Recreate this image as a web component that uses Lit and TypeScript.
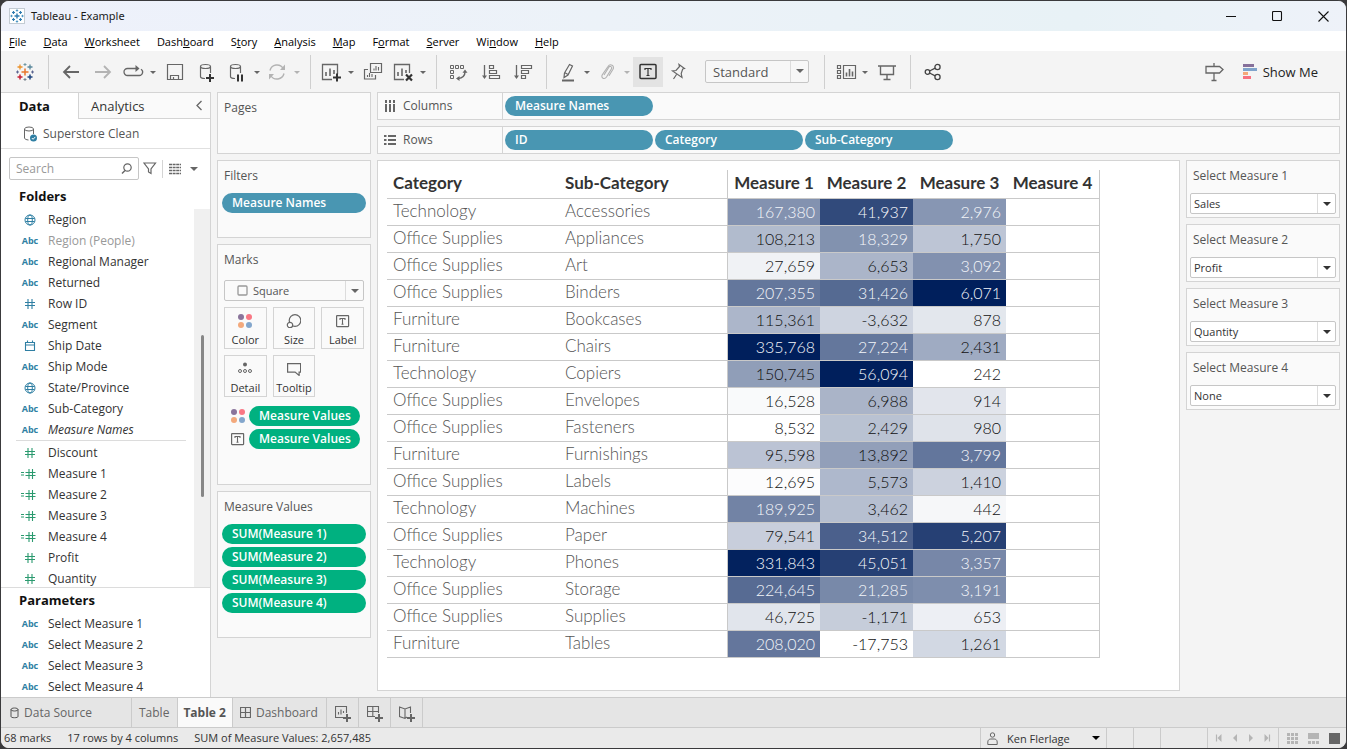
import { LitElement, html, svg, css, nothing, TemplateResult } from "lit";
import { customElement, state } from "lit/decorators.js";
import { classMap } from "lit/directives/class-map.js";

type Kind = "geo" | "abc" | "num" | "date" | "calc";
interface Field { name: string; kind: Kind; muted?: boolean; italic?: boolean; }
interface Row { category: string; sub: string; values: [number, number, number]; }

const DIMENSIONS: Field[] = [
  { name: "Region", kind: "geo" },
  { name: "Region (People)", kind: "abc", muted: true },
  { name: "Regional Manager", kind: "abc" },
  { name: "Returned", kind: "abc" },
  { name: "Row ID", kind: "num" },
  { name: "Segment", kind: "abc" },
  { name: "Ship Date", kind: "date" },
  { name: "Ship Mode", kind: "abc" },
  { name: "State/Province", kind: "geo" },
  { name: "Sub-Category", kind: "abc" },
  { name: "Measure Names", kind: "abc", italic: true },
];

const MEASURES: Field[] = [
  { name: "Discount", kind: "num" },
  { name: "Measure 1", kind: "calc" },
  { name: "Measure 2", kind: "calc" },
  { name: "Measure 3", kind: "calc" },
  { name: "Measure 4", kind: "calc" },
  { name: "Profit", kind: "num" },
  { name: "Quantity", kind: "num" },
];

const PARAMETERS = [
  { name: "Select Measure 1", value: "Sales" },
  { name: "Select Measure 2", value: "Profit" },
  { name: "Select Measure 3", value: "Quantity" },
  { name: "Select Measure 4", value: "None" },
];

const ROWS: Row[] = [
  { category: "Technology", sub: "Accessories", values: [167380, 41937, 2976] },
  { category: "Office Supplies", sub: "Appliances", values: [108213, 18329, 1750] },
  { category: "Office Supplies", sub: "Art", values: [27659, 6653, 3092] },
  { category: "Office Supplies", sub: "Binders", values: [207355, 31426, 6071] },
  { category: "Furniture", sub: "Bookcases", values: [115361, -3632, 878] },
  { category: "Furniture", sub: "Chairs", values: [335768, 27224, 2431] },
  { category: "Technology", sub: "Copiers", values: [150745, 56094, 242] },
  { category: "Office Supplies", sub: "Envelopes", values: [16528, 6988, 914] },
  { category: "Office Supplies", sub: "Fasteners", values: [8532, 2429, 980] },
  { category: "Furniture", sub: "Furnishings", values: [95598, 13892, 3799] },
  { category: "Office Supplies", sub: "Labels", values: [12695, 5573, 1410] },
  { category: "Technology", sub: "Machines", values: [189925, 3462, 442] },
  { category: "Office Supplies", sub: "Paper", values: [79541, 34512, 5207] },
  { category: "Technology", sub: "Phones", values: [331843, 45051, 3357] },
  { category: "Office Supplies", sub: "Storage", values: [224645, 21285, 3191] },
  { category: "Office Supplies", sub: "Supplies", values: [46725, -1171, 653] },
  { category: "Furniture", sub: "Tables", values: [208020, -17753, 1261] },
];

// Each measure has its own white-to-navy scale, from its lowest to its highest value.
const NAVY = [0, 31, 92];
const RANGES = [0, 1, 2].map((i) => {
  const all = ROWS.map((r) => r.values[i]);
  return { min: Math.min(...all), max: Math.max(...all) };
});
const share = (value: number, i: number) =>
  (value - RANGES[i].min) / (RANGES[i].max - RANGES[i].min);
const shade = (t: number) =>
  `rgb(${NAVY.map((c) => Math.round(255 + (c - 255) * t)).join(",")})`;

const icon = (body: unknown, w = 24, h = 24) => html`<svg
  class="icon" width=${w} height=${h} viewBox="0 0 ${w} ${h}" aria-hidden="true">${body}</svg>`;

const plus = (x: number, y: number, r: number, color: string, w = 1) =>
  svg`<path d="M${x - r} ${y}H${x + r}M${x} ${y - r}V${y + r}" stroke=${color} stroke-width=${w} fill="none"/>`;

const G = "#666";
const I = {
  logo: svg`${plus(12, 12, 3.5, "#e8762c", 1.5)}${plus(7, 7, 2.5, "#eb9129", 1.3)}${plus(17, 7, 2.5, "#59879b", 1.3)}
    ${plus(7, 17, 2.5, "#c72035", 1.5)}${plus(17, 17, 2.5, "#1f447e", 1.5)}${plus(12, 4.5, 1.5, "#7099a5")}
    ${plus(12, 19.5, 1.5, "#7b848f")}${plus(4.5, 12, 1.5, "#5b6591")}${plus(19.5, 12, 1.5, "#5b6591")}`,
  appLogo: svg`<rect x=".5" y=".5" width="15" height="15" fill="#fff" stroke="#c3cbd3"/>
    ${plus(8, 8, 2.5, "#2f7bb0", 1.4)}${plus(4.5, 4.5, 1.5, "#2f7bb0", 1.2)}${plus(11.5, 4.5, 1.5, "#2f7bb0", 1.2)}
    ${plus(4.5, 11.5, 1.5, "#2f7bb0", 1.2)}${plus(11.5, 11.5, 1.5, "#2f7bb0", 1.2)}${plus(8, 2.5, 1.2, "#4f96c4")}
    ${plus(8, 13.5, 1.2, "#4f96c4")}${plus(2.5, 8, 1.2, "#4f96c4")}${plus(13.5, 8, 1.2, "#4f96c4")}`,
  back: svg`<path d="M20 12H5M11 6l-6 6 6 6" fill="none" stroke=${G} stroke-width="1.8"/>`,
  forward: svg`<path d="M4 12h15M13 6l6 6-6 6" fill="none" stroke="#b3b3b3" stroke-width="1.8"/>`,
  replay: svg`<path d="M11 8.5H6.500a3.500 3.500 0 0 0 0 7H18a3.400 3.400 0 0 0 2-6.300M11 8.500h6" fill="none" stroke=${G} stroke-width="1.300"/><path d="M14.500 5l4 3.500-4 3.500z" fill=${G}/>`,
  save: svg`<path d="M4.500 4.500h15v15h-15zM7.500 19.500v-4h8v4M10.500 17v2.500" fill="none" stroke=${G} stroke-width="1.200"/>`,
  dbAdd: svg`<path d="M5.500 6.500v10c0 1.200 2 2 4.500 2M15.500 6.500V13" fill="none" stroke=${G} stroke-width="1.200"/><ellipse cx="10.500" cy="6.500" rx="5" ry="2" fill="none" stroke=${G} stroke-width="1.200"/><path d="M15 14v8M11 18h8" stroke="#333" stroke-width="2"/>`,
  dbPause: svg`<path d="M5.500 6.500v10c0 1.200 2 2 4.500 2M15.500 6.500V13" fill="none" stroke=${G} stroke-width="1.200"/><ellipse cx="10.500" cy="6.500" rx="5" ry="2" fill="none" stroke=${G} stroke-width="1.200"/><path d="M13 14.500v7M17 14.500v7" stroke="#333" stroke-width="2"/>`,
  refresh: svg`<path d="M5 10.500a7.200 7.200 0 0 1 13.200-2M19 13.500a7.200 7.200 0 0 1-13.200 2" fill="none" stroke="#b3b3b3" stroke-width="1.400"/><path d="M20 4.500v5.500h-5zM4 19.500V14h5z" fill="#b3b3b3"/>`,
  sheetAdd: svg`<path d="M13 19.500H3.500v-15h15V14" fill="none" stroke=${G} stroke-width="1.300"/><path d="M7 16v-4M11 16V8.500M15 14v-4" stroke=${G} stroke-width="1.600"/><path d="M18 13.500v8M14 17.500h8" stroke="#333" stroke-width="2"/>`,
  duplicate: svg`<path d="M9.500 3.500h11v9h-11zM7 9.500H3.500v9.500h11v-4" fill="none" stroke=${G} stroke-width="1.200"/><path d="M13 10.500V8.500M15 10.500V6M17.500 10.500V7M6.500 17v-2M8.500 17v-4M11 17v-3" stroke=${G} stroke-width="1.100"/>`,
  sheetClear: svg`<path d="M13 19.500H3.500v-15h15V13" fill="none" stroke=${G} stroke-width="1.300"/><path d="M7 16v-4M11 16V8.500M15 13v-3" stroke=${G} stroke-width="1.600"/><path d="M15 14.500l6 6M21 14.500l-6 6" stroke="#333" stroke-width="2.200"/>`,
  swap: svg`<path d="M3.500 5.500h3v3h-3zM8.500 5.500h3v3h-3zM13.500 5.500h3v3h-3zM3.500 10.500h3v3h-3zM3.500 15.500h3v3h-3z" fill="none" stroke=${G}/><path d="M18 12c0 4-2.500 6-7 6.500" fill="none" stroke=${G} stroke-width="1.400"/><path d="M15.500 12.800h5L18 9.500zM12.500 16v5L9 18.500z" fill=${G}/>`,
  sortAsc: svg`<path d="M5.500 5v12" stroke=${G} stroke-width="1.300"/><path d="M3 15.500h5L5.500 19z" fill=${G}/><path d="M10.500 5.500h4v3h-4zM10.500 10.500h7v3h-7zM10.500 15.500h10v3h-10z" fill="none" stroke=${G} stroke-width="1.200"/>`,
  sortDesc: svg`<path d="M5.500 5v12" stroke=${G} stroke-width="1.300"/><path d="M3 15.500h5L5.500 19z" fill=${G}/><path d="M10.500 5.500h10v3h-10zM10.500 10.500h7v3h-7zM10.500 15.500h4v3h-4z" fill="none" stroke=${G} stroke-width="1.200"/>`,
  pen: svg`<path d="M9.500 13l5-8.500 3 1.500-4.500 9-4 2.500zM9.500 12.500l3.500 2" fill="none" stroke=${G} stroke-width="1.200"/><path d="M7 20.500h12" stroke=${G} stroke-width="2"/>`,
  clip: svg`<path d="M9 15l5-8c1-1.500 3.500 0 2.500 1.700l-5 8.300c-2 3-6 1-4.200-2.200L13 6.500c2.200-3.500 7-.7 5 2.800l-4 6.500" fill="none" stroke="#b0b0b0" stroke-width="1.100"/>`,
  text: svg`<rect x="4" y="4.500" width="16" height="14" rx="1" fill="none" stroke="#333" stroke-width="1.500"/><path d="M9 10V8.500h6V10M12 8.500v6.500M10.500 15.500h3" fill="none" stroke="#333" stroke-width="1.200"/>`,
  pin: svg`<path d="M12 4.500l5.500 4-1.800.5-1.500 4.500.8 4L5.500 11l3.500-.5 3.500-4zM9.500 14.500L6.500 19" fill="none" stroke=${G} stroke-width="1.200"/>`,
  cards: svg`<path d="M4.500 5.500h3v3h-3zM4.500 10.500h3v3h-3zM4.500 15.500h3v3h-3zM10.500 5.500h12v13h-12z" fill="none" stroke=${G} stroke-width="1.200"/><path d="M13.500 16.500v-4M16.500 16.500V9M19.500 16.500v-5" stroke=${G} stroke-width="1.600"/>`,
  present: svg`<path d="M3 6h18M5.500 6v8.500h13V6M12 14.500V19M8.500 19.500h7" fill="none" stroke=${G} stroke-width="1.400"/>`,
  share: svg`<circle cx="6.500" cy="12" r="2.300"/><circle cx="16.500" cy="7" r="2.600"/><circle cx="16.500" cy="17" r="2.600"/><path d="M8.500 11l5.700-2.800M8.500 13l5.700 2.800"/>`,
  sign: svg`<path d="M4 6.500h13.500l3.500 3-3.500 3.500H4zM12 3v3.500M12 13v7M9.500 20.500h5" fill="none" stroke=${G} stroke-width="1.300"/>`,
  showMe: svg`<path d="M0 0h11v3H0z" fill="#86709a"/><path d="M0 4h14v3H0z" fill="#80a4cb"/><path d="M0 8h5v3H0z" fill="#f5a878"/><path d="M0 12h8v3H0z" fill="#f7717f"/>`,
  colorDots: svg`<circle cx="3" cy="3" r="3" fill="#8a749b"/><circle cx="11" cy="3" r="3" fill="#f97784"/><circle cx="3" cy="11" r="3" fill="#f3a97c"/><circle cx="11" cy="11" r="3" fill="#83a6cc"/>`,
  size: svg`<circle cx="9" cy="6.500" r="5.800" fill="none" stroke=${G} stroke-width="1.200"/><circle cx="4" cy="11" r="2.700" fill="#fff" stroke=${G} stroke-width="1.200"/>`,
  label: svg`<rect x=".6" y="1.600" width="12" height="11" rx=".5" fill="none" stroke=${G} stroke-width="1.200"/><path d="M4 6V4.500h5V6M6.500 4.500V10M5.500 10.200h2" fill="none" stroke=${G} stroke-width="1.100"/>`,
  detail: svg`<circle cx="7" cy="2.500" r="2" fill=${G}/><g fill="none" stroke=${G}><circle cx="2" cy="9" r="1.500"/><circle cx="7" cy="9" r="1.500"/><circle cx="12" cy="9" r="1.500"/></g>`,
  tooltip: svg`<path d="M.6 1.600h13v8.500h-1.500v3.300l-4-3.300H.6z" fill="none" stroke=${G} stroke-width="1.200"/>`,
  columns: svg`<path d="M2 0v3M2 4v8M6 0v3M6 4v8M10 0v3M10 4v8" stroke=${G} stroke-width="2"/>`,
  rows: svg`<path d="M0 2h2.500M4 2h8M0 6h2.500M4 6h8M0 10h2.500M4 10h8" stroke=${G} stroke-width="2"/>`,
  source: svg`<ellipse cx="6" cy="3" rx="4.500" ry="2" fill="none" stroke=${G}/><path d="M1.500 3v9c0 1 1.800 1.800 4 2M10.500 3v5" fill="none" stroke=${G}/><circle cx="10.500" cy="12" r="3.500" fill="#2f7fa3"/><path d="M8.800 12l1.300 1.300 2.200-2.400" stroke="#fff" fill="none"/>`,
  search: svg`<circle cx="6.500" cy="4.500" r="3.700" fill="none" stroke=${G} stroke-width="1.200"/><path d="M4 7.500L1 10.500" stroke=${G} stroke-width="1.400"/>`,
  funnel: svg`<path d="M1 1h11.500L8 7v4.500L5.500 10V7z" fill="none" stroke=${G} stroke-width="1.200"/>`,
  list: svg`<path d="M0 1.500h12M0 4.500h12M0 7.500h12M0 10.500h12" stroke=${G} stroke-width="1.500" stroke-dasharray="3 .6"/>`,
  chevron: svg`<path d="M5.500 1L1 5.500 5.500 10" fill="none" stroke=${G} stroke-width="1.300"/>`,
  geo: svg`<g fill="none" stroke="#2f7fa3"><circle cx="6" cy="6" r="5"/><ellipse cx="6" cy="6" rx="2.300" ry="5"/><path d="M1.500 4.500h9M1.500 7.500h9"/></g>`,
  num: svg`<path d="M4 1v10M8 1v10M1 4.500h10M1 7.500h10" fill="none" stroke="currentColor" stroke-width="1.100"/>`,
  calc: svg`<path d="M8 1v10M11.500 1v10M4.500 4.500h10M4.500 7.500h10M0 4.500h3M0 7h3" fill="none" stroke="currentColor" stroke-width="1.100"/>`,
  date: svg`<path d="M1.500 2.500h9v8h-9zM1.500 5h9M3.500 .5v2M8.500 .5v2" fill="none" stroke="#2f7fa3" stroke-width="1.100"/>`,
  cylinder: svg`<path d="M1 2.500v7c0 .8 1.500 1.200 3.500 1.200S8 10.300 8 9.500v-7M1 2.500C1 1.700 2.500 1 4.500 1S8 1.700 8 2.500 6.500 4 4.500 4 1 3.300 1 2.500z" fill="none" stroke="#555"/>`,
  board: svg`<path d="M.5 .5h10v10H.5zM5.500 .5v10M.5 5.500h10" fill="none" stroke=${G} stroke-width="1.200"/>`,
  newSheet: svg`<path d="M8 11.500H.5V.5h11V7M3.500 8.500V6M6 8.500V3.500M8.500 7V5" fill="none" stroke=${G} stroke-width="1.100"/><path d="M12 8v8M8 12h8" stroke=${G} stroke-width="2"/>`,
  newBoard: svg`<path d="M8 10.500H.5V.5h11V7M5.800 .5v10M.5 5.500h11" fill="none" stroke=${G} stroke-width="1.100"/><path d="M12 8v8M8 12h8" stroke=${G} stroke-width="2"/>`,
  newStory: svg`<path d="M8 11L6 12.500l-5.500-2V1L6 3l5.500-2v6M6 3v9" fill="none" stroke=${G} stroke-width="1.100"/><path d="M12 8v8M8 12h8" stroke=${G} stroke-width="2"/>`,
  person: svg`<circle cx="5.500" cy="3" r="2.200" fill="none" stroke=${G}/><path d="M.8 12.500V10c0-2 1.500-3 3-3h3.400c1.500 0 3 1 3 3v2.500z" fill="none" stroke=${G}/>`,
};

@customElement("app-root")
export class AppRoot extends LitElement {
  @state() private labels = true;

  static styles = css`
    :host {
      display: block;
      height: 100vh;
      font: 12px/16px "Open Sans", "Noto Sans", sans-serif;
      color: #333;
      background: #3a3a3c;
    }
    * { box-sizing: border-box; }
    svg { display: block; flex: none; }
    button, select, input { font: inherit; color: inherit; margin: 0; padding: 0; border: 0; background: none; }
    h2 { margin: 0; font-size: 12px; line-height: 16px; font-weight: 400; color: #555; }
    .window {
      display: flex; flex-direction: column; height: 100%;
      border: 1px solid #3a3a3c; border-radius: 9px; overflow: hidden;
      background: #f4f4f4;
    }
    .title {
      display: flex; align-items: center; height: 30px; padding-left: 8px; gap: 6px; color: #1a1a1a;
      background: linear-gradient(90deg, #eef1fb 0%, #ecf2f8 45%, #e8f2f6 80%, #eef2f9 100%);
    }
    .title h1 { margin: 0; flex: 1; font: 400 11px/16px "Noto Sans", sans-serif; }
    .win-btns { display: flex; }
    .win-btn { width: 46px; height: 30px; display: grid; place-items: center; }
    .menu { display: flex; gap: 17px; height: 20px; padding: 2px 8px; background: #fff; color: #000; font-size: 11px; line-height: 18px; }
    .menu a { color: inherit; text-decoration: none; }

    .toolbar { display: flex; align-items: flex-start; padding: 6px 23px 5px 0; }
    .toolbar button { height: 30px; display: flex; align-items: center; justify-content: center; }
    .logo { width: 47px; }
    .tool { width: 32px; }
    .tool.paired { width: 28px; }
    .tool.on { width: 30px; background: #e3e3e3; }
    .drop { width: 12px; }
    .sep { width: 1px; height: 34px; margin: -2px 6px -2px 7px; background: #cfcfcf; }
    .logo + .sep { margin-left: 0; }
    .caret { width: 0; height: 0; border: 3px solid transparent; border-top: 3px solid #666; border-bottom: 0; }
    .caret.faint { border-top-color: #b3b3b3; }
    .caret.big { border-width: 4px 4px 0; }
    .caret.black { border-top-color: #000; }
    .grow { flex: 1; }
    .show-me { gap: 6px; padding: 0 5px; margin-left: 8px; font-size: 13px; color: #222; }

    .pick { position: relative; display: flex; border: 1px solid #c6c6c6; border-radius: 2px; background: #fff; color: #333; font-size: 11px; }
    .pick select { appearance: none; flex: 1; min-width: 0; height: 19px; padding: 0 20px 0 3px; outline: 0; }
    .pick::before { content: ""; position: absolute; right: 17px; top: 0; bottom: 0; width: 1px; background: #dcdcdc; pointer-events: none; }
    .pick::after { content: ""; position: absolute; right: 4px; top: 8px; border: 4px solid transparent; border-top-color: #333; border-bottom: 0; pointer-events: none; }
    .pick.fit { width: 104px; margin: 3px 8px 0 10px; background: #f7f7f7; color: #555; font-size: 13px; }
    .pick.fit select { height: 21px; padding-left: 7px; }
    .pick.mark { margin: 12px 6px 6px 6px; background: #fafafa; color: #555; }
    .pick.fit::after, .pick.mark::after { border-top-color: #666; }
    .pick.mark select { padding-left: 28px; }
    .pick.mark .icon { position: absolute; left: 12px; top: 4px; }

    .body { flex: 1; min-height: 0; display: flex; gap: 6px; padding-right: 6px; }
    .pane { width: 210px; flex: none; display: flex; flex-direction: column; background: #fff; border: solid #d4d4d4; border-width: 1px 1px 0 0; }
    .tabs { display: flex; height: 26px; font-size: 13px; }
    .tabs button { width: 77px; padding-right: 10px; }
    .tabs button.selected { font-weight: 700; color: #111; }
    .tabs .rest { flex: 1; display: flex; align-items: center; justify-content: space-between; padding: 0 7px 0 0; background: #fafafa; border: solid #d4d4d4; border-width: 0 0 1px 1px; }
    .tabs .rest .analytics { width: auto; padding: 0 12px; }
    .tabs .rest .fold { width: auto; padding: 0; }
    .source { display: flex; align-items: center; gap: 6px; height: 30px; padding: 0 22px; border-bottom: 1px solid #e0e0e0; color: #555; }
    .find { display: flex; align-items: center; padding: 8px 8px 5px; }
    .find label { display: flex; align-items: center; flex: none; width: 130px; height: 23px; padding: 0 6px; border: 1px solid #c6c6c6; border-radius: 2px; }
    .find input { flex: 1; min-width: 0; outline: 0; }
    .find input::placeholder { color: #999; opacity: 1; }
    .find .filter { margin: 0 5px 0 4px; }
    .find .view { display: flex; align-items: center; gap: 8px; padding-left: 6px; height: 18px; border-left: 1px solid #d4d4d4; }
    .find .view::after { content: ""; border: 4px solid transparent; border-top-color: #666; border-bottom: 0; }
    h3 { margin: 0; padding: 0 18px 2px; font-size: 13px; line-height: 22px; font-weight: 700; color: #111; }
    .scroller { flex: 1; min-height: 0; display: flex; overflow: hidden; }
    .scroller .lists { flex: 1; min-width: 0; }
    .track { width: 16px; background: #f0f0f0; }
    .thumb { width: 3px; height: 162px; margin: 126px 0 0 7px; border-radius: 2px; background: #868686; }
    ul { list-style: none; margin: 0; padding: 0; }
    .lists ul + ul { margin: 0 8px 0 15px; padding-top: 1px; border-top: 1px solid #dcdcdc; }
    .lists ul + ul .field { margin-left: -15px; }
    .field { display: grid; grid-template-columns: 18px 1fr; column-gap: 9px; align-items: center; height: 21px; padding-left: 20px; color: #333; }
    .field.muted { color: #999; }
    .field.italic { font-style: italic; }
    .glyph { display: flex; justify-content: center; color: #2f7fa3; font-style: normal; }
    .glyph.calc { justify-content: flex-start; }
    .measures .glyph { color: #2b9a6f; }
    .abc { font-size: 9px; font-weight: 700; }
    .params { border-top: 1px solid #dcdcdc; padding-top: 1px; }

    .cards { width: 154px; flex: none; display: flex; flex-direction: column; gap: 6px; }
    .card { border: 1px solid #d4d4d4; background: #fafafa; padding: 7px 4px; }
    .cards .card { padding-left: 0; padding-right: 0; }
    .cards h2 { padding: 0 6px; }
    .pages { height: 62px; }
    .filters { height: 78px; }
    .marks { height: 241px; }
    .values { height: 147px; }
    .pill { display: block; height: 20px; padding: 0 10px; border-radius: 10px; background: #4996b2; color: #fff; font-weight: 600; line-height: 20px; text-align: left; white-space: nowrap; }
    .pill.green { background: #00b180; }
    .pills { display: flex; flex-direction: column; gap: 3px; margin: 9px 4px 0; }
    .mark-grid { display: grid; grid-template-columns: repeat(3, 1fr); gap: 6px; margin: 0 6px 9px 6px; }
    .mark-grid button { height: 42px; display: flex; flex-direction: column; align-items: center; justify-content: space-between; padding: 6px 0 0; border: 1px solid #d4d4d4; font-size: 11px; }
    .encoded { display: grid; grid-template-columns: 14px 111px; gap: 3px 4px; align-items: center; margin: 0 0 0 13px; }

    .main { flex: 1; min-width: 0; display: flex; flex-direction: column; gap: 6px; }
    .shelf { display: flex; height: 28px; border: 1px solid #d4d4d4; background: #fafafa; }
    .shelf h2 { width: 125px; display: flex; align-items: center; gap: 7px; padding-left: 6px; border-right: 1px solid #d4d4d4; }
    .shelf .drop-zone { display: flex; gap: 2px; padding: 3px 2px; }
    .shelf .pill { width: 148px; }
    .work { flex: 1; min-height: 0; display: flex; gap: 6px; padding-bottom: 6px; }
    .sheet { flex: 1; min-width: 0; overflow: hidden; padding: 9px; border: 1px solid #d4d4d4; background: #fff; }
    .side { width: 154px; flex: none; display: flex; flex-direction: column; gap: 6px; }
    .side .card { padding: 7px 3px 3px; }
    .side label { display: block; padding: 0 3px; margin-bottom: 9px; color: #555; }

    table { border-collapse: separate; border-spacing: 0; table-layout: fixed; width: 713px; font: 300 17px/24px Lato, sans-serif; }
    .c-cat { width: 172px; }
    .c-sub { width: 168px; }
    .c-m { width: 93px; }
    th, td { height: 27px; padding: 0 6px 2px; border-bottom: 1px solid #c9c9c9; text-align: left; font-weight: 300; white-space: nowrap; color: #555; }
    thead th { height: 29px; font-weight: 700; color: #333; }
    thead th.m { padding-left: 0; padding-right: 0; text-align: center; }
    td { padding: 0 5px 0 0; font-size: 16px; text-align: right; color: #111; }
    td.light { color: #f4f6fa; }
    .first { border-left: 1px solid #c9c9c9; }
    .last { border-right: 1px solid #c9c9c9; }

    .sheets { display: flex; height: 31px; background: #e5e5e5; border: solid #cbcbcb; border-width: 1px 0; }
    .sheets button { display: flex; align-items: center; gap: 5px; padding: 0 8px 0 7px; border-right: 1px solid #cbcbcb; color: #666; }
    .sheets .ds { width: 131px; padding-left: 9px; }
    .sheets .current { background: #fafafa; font-weight: 700; color: #555; padding: 0 6px 0 5px; }
    .sheets .new { width: 32px; padding: 2px 0 0 8px; }
    .status { display: flex; height: 20px; background: #eaeaea; color: #333; line-height: 19px; font-size: 11px; padding-left: 3px; gap: 16px; }
    .status .end { display: flex; margin-left: auto; }
    .status .end > * { border-left: 1px solid #cbcbcb; height: 100%; }
    .user { display: flex; align-items: center; gap: 9px; width: 126px; padding: 0 6px 0 6px; }
    .slot { width: 27px; }
    .slot.wide { width: 47px; }
    .nav { width: 71px; display: flex; align-items: center; justify-content: center; }
    .views { width: 68px; display: flex; align-items: center; padding-left: 8px; }
  `;

  private pill(text: string, green = false) {
    return html`<button class=${classMap({ pill: true, green })}>${text}</button>`;
  }

  private tool(name: string, body: unknown, drop?: "on" | "faint") {
    return html`<button class=${classMap({ tool: true, paired: !!drop })} aria-label=${name}>${icon(body)}</button>${drop
      ? html`<button class="drop" aria-label="${name} options"><span class=${classMap({ caret: true, faint: drop === "faint" })}></span></button>`
      : nothing}`;
  }

  private field(f: Field) {
    const glyphs: Record<Kind, TemplateResult> = {
      geo: icon(I.geo, 12, 12),
      abc: html`<span class="abc">Abc</span>`,
      num: icon(I.num, 12, 12),
      calc: icon(I.calc, 16, 12),
      date: icon(I.date, 12, 12),
    };
    return html`<li class=${classMap({ field: true, muted: !!f.muted, italic: !!f.italic })}>
      <span class=${classMap({ glyph: true, calc: f.kind === "calc" })}>${glyphs[f.kind]}</span><span>${f.name}</span></li>`;
  }

  private renderTop() {
    const menus = [["", "F", "ile"], ["", "D", "ata"], ["", "W", "orksheet"], ["Dash", "b", "oard"], ["S", "t", "ory"],
      ["", "A", "nalysis"], ["", "M", "ap"], ["F", "o", "rmat"], ["", "S", "erver"], ["Wi", "n", "dow"], ["", "H", "elp"]];
    return html`
      <header class="title">${icon(I.appLogo, 16, 16)}<h1>Tableau - Example</h1>
        <div class="win-btns">
          <button class="win-btn" aria-label="Minimize">${icon(svg`<path d="M0 5.500h10" stroke="#111"/>`, 11, 11)}</button>
          <button class="win-btn" aria-label="Maximize">${icon(svg`<rect x=".5" y=".5" width="9" height="9" rx="1" fill="none" stroke="#111" stroke-width="1.100"/>`, 11, 11)}</button>
          <button class="win-btn" aria-label="Close">${icon(svg`<path d="M.5 .5l10 10M10.500 .5l-10 10" stroke="#111" stroke-width="1.100"/>`, 11, 11)}</button>
        </div>
      </header>
      <nav class="menu">${menus.map(([a, k, b]) => html`<a href="#">${a}<u>${k}</u>${b}</a>`)}</nav>
      <div class="toolbar" role="toolbar">
        <button class="logo" aria-label="Start page">${icon(I.logo)}</button>
        <span class="sep"></span>
        ${this.tool("Undo", I.back)}${this.tool("Redo", I.forward)}${this.tool("Replay", I.replay, "on")}
        ${this.tool("Save", I.save)}${this.tool("New data source", I.dbAdd)}${this.tool("Pause updates", I.dbPause, "on")}
        ${this.tool("Run update", I.refresh, "faint")}
        <span class="sep"></span>
        ${this.tool("New worksheet", I.sheetAdd, "on")}${this.tool("Duplicate", I.duplicate)}${this.tool("Clear sheet", I.sheetClear, "on")}
        <span class="sep"></span>
        ${this.tool("Swap", I.swap)}${this.tool("Sort ascending", I.sortAsc)}${this.tool("Sort descending", I.sortDesc)}
        <span class="sep"></span>
        ${this.tool("Highlight", I.pen, "on")}${this.tool("Group", I.clip, "faint")}
        <button class=${classMap({ tool: true, on: this.labels })} aria-label="Show mark labels"
          @click=${() => (this.labels = !this.labels)}>${icon(I.text)}</button>
        ${this.tool("Fix axes", I.pin)}
        <span class="pick fit"><select aria-label="Fit"><option>Standard</option></select></span>
        <span class="sep"></span>
        ${this.tool("Show or hide cards", I.cards, "on")}${this.tool("Presentation mode", I.present)}
        <span class="sep"></span>
        ${this.tool("Share", svg`<g fill="none" stroke="#444" stroke-width="1.300">${I.share}</g>`)}
        <span class="grow"></span>
        ${this.tool("Data guide", I.sign)}
        <button class="show-me">${icon(I.showMe, 14, 16)}Show Me</button>
      </div>`;
  }

  private renderPane() {
    return html`<aside class="pane">
      <div class="tabs"><button class="selected">Data</button>
        <div class="rest"><button class="analytics">Analytics</button><button class="fold" aria-label="Collapse">${icon(I.chevron, 7, 11)}</button></div></div>
      <div class="source">${icon(I.source, 14, 16)}Superstore Clean</div>
      <div class="find">
        <label><input type="text" placeholder="Search" aria-label="Search" />${icon(I.search, 11, 11)}</label>
        <button class="filter" aria-label="Filter fields">${icon(I.funnel, 14, 13)}</button>
        <button class="view" aria-label="View options">${icon(I.list, 13, 12)}</button>
      </div>
      <h3>Folders</h3>
      <div class="scroller">
        <div class="lists"><ul>${DIMENSIONS.map((f) => this.field(f))}</ul>
          <ul class="measures">${MEASURES.map((f) => this.field(f))}</ul></div>
        <div class="track"><div class="thumb"></div></div>
      </div>
      <section class="params"><h3>Parameters</h3>
        <ul>${PARAMETERS.map((p) => this.field({ name: p.name, kind: "abc" }))}</ul></section>
    </aside>`;
  }

  private renderCards() {
    return html`<div class="cards">
      <section class="card pages"><h2>Pages</h2></section>
      <section class="card filters"><h2>Filters</h2><div class="pills">${this.pill("Measure Names")}</div></section>
      <section class="card marks"><h2>Marks</h2>
        <div class="pick mark">${icon(svg`<rect x="1" y="1" width="9" height="9" rx="1" fill="none" stroke="#999" stroke-width="1.300"/>`, 11, 11)}
          <select aria-label="Mark type"><option>Square</option></select></div>
        <div class="mark-grid">
          <button>${icon(I.colorDots, 14, 14)}Color</button>
          <button>${icon(I.size, 15, 14)}Size</button>
          <button>${icon(I.label, 14, 14)}Label</button>
          <button>${icon(I.detail, 14, 14)}Detail</button>
          <button>${icon(I.tooltip, 14, 14)}Tooltip</button>
        </div>
        <div class="encoded">${icon(I.colorDots, 14, 14)}${this.pill("Measure Values", true)}
          ${icon(I.label, 14, 14)}${this.pill("Measure Values", true)}</div>
      </section>
      <section class="card values"><h2>Measure Values</h2>
        <div class="pills">${[1, 2, 3, 4].map((n) => this.pill(`SUM(Measure ${n})`, true))}</div></section>
    </div>`;
  }

  private renderTable() {
    return html`<table>
      <colgroup><col class="c-cat" /><col class="c-sub" /><col class="c-m" /><col class="c-m" /><col class="c-m" /><col /></colgroup>
      <thead><tr><th scope="col">Category</th><th scope="col">Sub-Category</th>
        ${[1, 2, 3, 4].map((n) => html`<th scope="col" class=${classMap({ m: true, first: n === 1, last: n === 4 })}>Measure ${n}</th>`)}</tr></thead>
      <tbody>${ROWS.map((r) => html`<tr><th scope="row">${r.category}</th><th scope="row">${r.sub}</th>
        ${r.values.map((v, i) => {
          const t = share(v, i);
          return html`<td class=${classMap({ first: i === 0, light: t > 0.45 })} style="background-color:${shade(t)}">${v.toLocaleString("en-US")}</td>`;
        })}<td class="last"></td></tr>`)}</tbody>
    </table>`;
  }

  private renderFooter() {
    const c = "#b5b5b5";
    const cells = [0, 4, 8];
    return html`<nav class="sheets">
        <button class="ds">${icon(I.cylinder, 9, 12)}Data Source</button>
        <button>Table</button>
        <button class="current">Table 2</button>
        <button>${icon(I.board, 11, 11)}Dashboard</button>
        <button class="new" aria-label="New worksheet">${icon(I.newSheet, 16, 16)}</button>
        <button class="new" aria-label="New dashboard">${icon(I.newBoard, 16, 16)}</button>
        <button class="new" aria-label="New story">${icon(I.newStory, 16, 16)}</button>
      </nav>
      <footer class="status"><span>68 marks</span><span>17 rows by 4 columns</span><span>SUM of Measure Values: 2,657,485</span>
        <div class="end">
          <button class="user">${icon(I.person, 11, 13)}Ken Flerlage<span class="grow"></span><span class="caret big black"></span></button>
          <span class="slot"></span><span class="slot"></span><span class="slot wide"></span>
          <span class="nav">${icon(svg`<path d="M6.500 2v8l-4-4zM22 2v8l-4-4zM34 2v8l4-4zM49.500 2v8l4-4z" fill=${c}/><path d="M1.500 2.500v7M54.500 2.500v7" stroke=${c} stroke-width="1.200"/>`, 56, 12)}</span>
          <span class="views">${icon(svg`
            ${cells.map((y) => cells.map((x) => svg`<rect x=${x} y=${y} width="3" height="3" fill=${c}/>`))}
            <rect x="21" y="0" width="11" height="6" fill=${c}/>${cells.map((x) => svg`<rect x=${21 + x} y="8" width="3" height="3" fill=${c}/>`)}
            <rect x="42" y="0" width="11" height="11" fill="#666"/>`, 54, 11)}</span>
        </div>
      </footer>`;
  }

  render() {
    return html`<div class="window">
      ${this.renderTop()}
      <div class="body">
        ${this.renderPane()}
        ${this.renderCards()}
        <main class="main">
          <div class="shelf"><h2>${icon(I.columns, 12, 12)}Columns</h2><div class="drop-zone">${this.pill("Measure Names")}</div></div>
          <div class="shelf"><h2>${icon(I.rows, 12, 12)}Rows</h2>
            <div class="drop-zone">${["ID", "Category", "Sub-Category"].map((p) => this.pill(p))}</div></div>
          <div class="work">
            <div class="sheet">${this.renderTable()}</div>
            <div class="side">${PARAMETERS.map((p, i) => html`<section class="card">
              <label for="param-${i}">${p.name}</label>
              <div class="pick"><select id="param-${i}">
                ${["Sales", "Profit", "Quantity", "None"].map((o) => html`<option ?selected=${o === p.value}>${o}</option>`)}
              </select></div></section>`)}</div>
          </div>
        </main>
      </div>
      ${this.renderFooter()}
    </div>`;
  }
}
